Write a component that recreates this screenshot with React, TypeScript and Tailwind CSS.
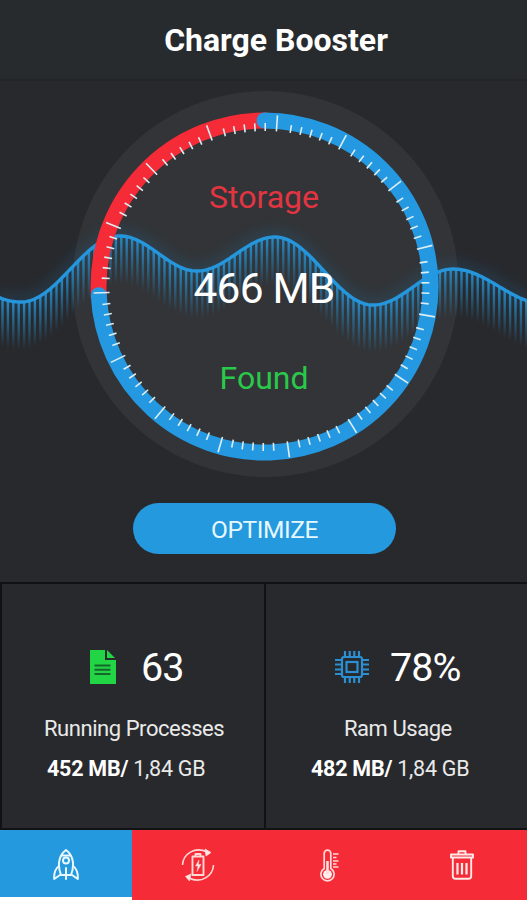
import type { ReactNode } from 'react';
import clsx from 'clsx';

type Point = [number, number];

type StatProps = {
  icon: ReactNode;
  value: string;
  label: string;
  used: string;
  total: string;
  className?: string;
};

const CX = 264.5;
const CY = 205.5;
const RING_RADIUS = 166;

// peaks and troughs of the wave behind the gauge
const EXTREMA: Point[] = [
  [-60, 195],
  [21, 221],
  [120, 155],
  [197, 190],
  [275, 156],
  [373, 224],
  [453, 188],
  [545, 223],
];

const waveY = (x: number) => {
  const i = Math.max(1, EXTREMA.findIndex(([px]) => px > x));
  const [x0, y0] = EXTREMA[i - 1];
  const [x1, y1] = EXTREMA[i];
  const t = (x - x0) / (x1 - x0);
  return y0 + ((y1 - y0) * (1 - Math.cos(Math.PI * t))) / 2;
};

const polar = (angle: number, r: number): Point => {
  const a = (angle * Math.PI) / 180;
  return [CX + r * Math.sin(a), CY - r * Math.cos(a)];
};

const arc = (from: number, to: number) => {
  const [x0, y0] = polar(from, RING_RADIUS);
  const [x1, y1] = polar(to, RING_RADIUS);
  return `M${x0} ${y0}A${RING_RADIUS} ${RING_RADIUS} 0 ${to - from > 180 ? 1 : 0} 1 ${x1} ${y1}`;
};

const wavePath = 'M' + Array.from({ length: 267 }, (_, i) => `${i * 2 - 2} ${waveY(i * 2 - 2).toFixed(2)}`).join('L');
const bars = Array.from({ length: 98 }, (_, i) => 2.5 + i * 5.4);
const ticks = Array.from({ length: 15 }, (_, i) => 4 + i * 24);
const minorOffsets = [5.1, 8.8, 12.5, 16.2, 19.9];

const Tick = ({ angle, from, to }: { angle: number; from: number; to: number }) => {
  const [x1, y1] = polar(angle, from);
  const [x2, y2] = polar(angle, to);
  return <line x1={x1} y1={y1} x2={x2} y2={y2} stroke="#dceef3" strokeWidth="1.6" />;
};

const Gauge = () => (
  <svg className="block" width="527" height="405" viewBox="0 0 527 405" fill="none">
    <defs>
      <linearGradient id="bar" x1="0" y1="0" x2="0" y2="1">
        <stop offset="0" stopColor="#2590d0" stopOpacity="0.95" />
        <stop offset="0.45" stopColor="#2485bf" stopOpacity="0.6" />
        <stop offset="1" stopColor="#2485bf" stopOpacity="0" />
      </linearGradient>
      <filter id="glow" x="-10%" y="-50%" width="120%" height="200%">
        <feGaussianBlur stdDeviation="7" />
      </filter>
    </defs>
    <circle cx="265.5" cy="203" r="193" fill="#323437" />
    <path d={wavePath} stroke="#1f7db8" strokeWidth="14" opacity="0.2" filter="url(#glow)" />
    {bars.map((x) => (
      <rect key={x} x={x - 1.2} y={waveY(x)} width="2.4" height="48" fill="url(#bar)" />
    ))}
    <path d={wavePath} stroke="#2596dc" strokeWidth="3.4" />
    <path d={arc(266, 361)} stroke="#f52b37" strokeWidth="16" />
    <path d={arc(0, 267)} stroke="#2499e1" strokeWidth="16" strokeLinecap="round" />
    <g transform="translate(1 0.5)">
      {ticks.map((angle) => (
        <g key={angle}>
          <Tick angle={angle} from={156} to={172} />
          {minorOffsets.map((offset) => (
            <Tick key={offset} angle={angle + offset} from={156} to={164} />
          ))}
        </g>
      ))}
    </g>
  </svg>
);

const FileIcon = () => (
  <svg width="26" height="34" viewBox="0 0 26 34" fill="#22d544">
    <path d="M0 0H15V10H26V34H0Z" />
    <path d="M17 0L25 8H17Z" />
    <path d="M4.5 15.5H20.5M4.5 19.7H20.5M4.5 24H20.5" stroke="#17662b" strokeWidth="2" />
  </svg>
);

const ChipIcon = () => (
  <svg width="34" height="32" viewBox="0 0 34 32" fill="none" stroke="#2c8fd2" strokeWidth="2.2">
    <rect x="7" y="6" width="20" height="20" rx="2" />
    <rect x="11.5" y="11" width="11" height="10" />
    <path d="M10 0V6M14.7 0V6M19.3 0V6M24 0V6M10 26V32M14.7 26V32M19.3 26V32M24 26V32" />
    <path d="M0 9H7M0 13.5H7M0 18.5H7M0 23H7M27 9H34M27 13.5H34M27 18.5H34M27 23H34" />
  </svg>
);

const RocketIcon = () => (
  <svg width="26" height="32" viewBox="0 0 26 32" fill="none" stroke="#e9f7ff" strokeWidth="2" strokeLinejoin="round" strokeLinecap="round">
    <path d="M8 26C4.5 17 5 7 13 1C21 7 21.5 17 18 26Z" />
    <path d="M9 6.5H17" />
    <circle cx="13" cy="11.5" r="3" />
    <path d="M6 17C2.5 19.5 .8 23 1.2 30L7 26M20 17C23.5 19.5 25.2 23 24.8 30L19 26" />
    <path d="M13 19V30" />
  </svg>
);

const BatteryIcon = () => (
  <svg width="34" height="34" viewBox="0 0 34 34" fill="none" stroke="#ffd9d6" strokeWidth="1.6" strokeLinejoin="round">
    <path d="M1.5 17C2 6 14-2 26 4" />
    <path d="M32.5 17C32 28 20 36 8 30" />
    <path d="M24 1L30 4.5L25 8ZM10 26L4.5 28.5L8.5 33Z" fill="#ffe9e7" strokeWidth="0.8" />
    <path d="M11.5 8.5H22.5V27H11.5Z M14.5 8.5V6H19.5V8.5" strokeWidth="1.9" />
    <path d="M18 12L14.5 18H17L16 23.5L20 16.5H17.4Z" fill="#ffe9e7" strokeWidth="0.5" />
  </svg>
);

const ThermometerIcon = () => (
  <svg width="20" height="33" viewBox="0 0 20 33" fill="none" stroke="#ffdcda" strokeWidth="1.7">
    <path d="M4.2 19.5V4.5A3.3 3.3 0 0 1 10.8 4.5V19.5A6.6 6.6 0 1 1 4.2 19.5Z" />
    <circle cx="7.5" cy="25.3" r="4.4" fill="#fff0ef" stroke="none" />
    <path d="M7.5 12V25" strokeWidth="2.6" />
    <path d="M13 5H18.5M13 8.5H16.5M13 12H18.5M13 15H16.5M13 18H18.5" strokeWidth="1.3" />
  </svg>
);

const TrashIcon = () => (
  <svg width="24" height="30" viewBox="0 0 24 30" fill="none" stroke="#ffeae8" strokeWidth="1.9" strokeLinejoin="round">
    <path d="M1 4.5H23V7.5H1ZM8.5 4.5V1.2H15.5V4.5" />
    <path d="M2.8 8V26A2.8 2.8 0 0 0 5.6 28.8H18.4A2.8 2.8 0 0 0 21.2 26V8" />
    <path d="M7.5 13V24.5M12 13V24.5M16.5 13V24.5" strokeWidth="2.2" />
  </svg>
);

const Stat = ({ icon, value, label, used, total, className }: StatProps) => (
  <section className={clsx('border-l-2 border-[#111214] pt-[59px]', className)}>
    <div className="flex h-[48px] items-center">
      <span className="flex w-[34px] shrink-0 justify-center">{icon}</span>
      <span className="mt-[2px] ml-[21px] text-[39.5px] leading-[48px] tracking-[-0.9px]">{value}</span>
    </div>
    <div className="mt-[23px] text-[22px] leading-[30px] tracking-[-0.45px] text-[#e9e9e9]">{label}</div>
    <div className="mt-[11px] text-[21.5px] leading-[28px] tracking-[-0.25px] text-[#e9e9e9]">
      <b className="text-white">{used}/</b> {total}
    </div>
  </section>
);

const tabs = [
  { name: 'Boost', icon: <RocketIcon /> },
  { name: 'Battery', icon: <BatteryIcon /> },
  { name: 'Cooler', icon: <ThermometerIcon /> },
  { name: 'Cleaner', icon: <TrashIcon /> },
];

const App = () => (
  <div className="flex h-[900px] w-[527px] flex-col overflow-hidden bg-[#28292d] font-['Roboto',sans-serif] text-white">
    <header className="flex h-[81px] shrink-0 justify-center border-b-2 border-[#242528] bg-[#272b2e] pt-[20px] pl-[25px]">
      <h1 className="text-[32px] leading-[40px] font-bold whitespace-nowrap">Charge Booster</h1>
    </header>
    <main className="flex h-[501px] shrink-0 flex-col items-center">
      <div className="relative">
        <Gauge />
        <div className="absolute inset-0 flex flex-col items-center pt-[96px] pl-[1px]">
          <span className="text-[32px] leading-[40px] text-[#e33442]">Storage</span>
          <span className="mt-[46px] text-[42.5px] leading-[52px] tracking-[-0.8px]">466 MB</span>
          <span className="mt-[43px] text-[32px] leading-[40px] text-[#2ac84b]">Found</span>
        </div>
      </div>
      <button className="mt-[17px] ml-[2px] h-[51px] w-[263px] rounded-full bg-[#2499de] pt-[3px] text-[24.5px] tracking-[-0.4px] text-[#e6f8ff]">
        OPTIMIZE
      </button>
    </main>
    <div className="grid h-[248px] shrink-0 grid-cols-[264px_263px] border-y-2 border-[#111214] whitespace-nowrap">
      <Stat
        icon={<FileIcon />}
        value="63"
        label="Running Processes"
        used="452 MB"
        total="1,84 GB"
        className="pl-[42px] [&>div:first-child]:pl-[42px] [&>div:last-child]:pl-[3px]"
      />
      <Stat
        icon={<ChipIcon />}
        value="78%"
        label="Ram Usage"
        used="482 MB"
        total="1,84 GB"
        className="pl-[45px] [&>div:first-child]:pl-[24px] [&>div:nth-child(2)]:pl-[33px]"
      />
    </div>
    <nav className="grid h-[70px] shrink-0 grid-cols-[repeat(4,132px)] bg-[#f52b37]">
      {tabs.map(({ name, icon }, index) => (
        <button
          key={name}
          aria-label={name}
          className={clsx(
            'flex items-center justify-center border-b-[3px] pt-[3px]',
            index === 0 ? 'border-white bg-[#2499de]' : 'border-transparent'
          )}
        >
          {icon}
        </button>
      ))}
    </nav>
  </div>
);

export default App;
